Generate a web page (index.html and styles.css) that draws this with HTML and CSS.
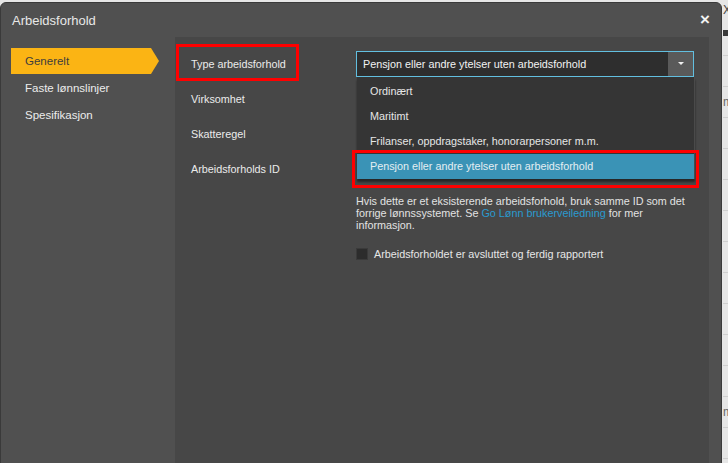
FILE: index.html
```html
<!DOCTYPE html>
<html lang="no">
<head>
  <meta charset="UTF-8" />
  <meta name="viewport" content="width=device-width, initial-scale=1.0"/>
  <title>Arbeidsforhold</title>
  <link rel="stylesheet" href="styles.css">
</head>
<body>
<div class="page">
  <div class="page-head">Xi</div>
  <div class="page-bar"></div>
  <div class="page-gap"></div>
  <div class="page-row"></div>
  <div class="page-row">m</div>
  <div class="page-row"></div>
  <div class="page-row"></div>
  <div class="page-row"></div>
  <div class="page-row"></div>
  <div class="page-row"></div>
  <div class="page-row"></div>
  <div class="page-row"></div>
  <div class="page-row"></div>
  <div class="page-row"></div>
  <div class="page-row">m</div>
  <div class="page-row"></div>
</div>

<div class="modal">
  <div class="modal-header">
    <span class="modal-title">Arbeidsforhold</span>
    <span class="modal-close">&times;</span>
  </div>

  <div class="modal-body">
    <ul class="nav">
      <li class="nav-item active">Generelt</li>
      <li class="nav-item">Faste lønnslinjer</li>
      <li class="nav-item">Spesifikasjon</li>
    </ul>

    <div class="panel">
      <div class="form">
        <div class="label">Type arbeidsforhold</div>
        <div class="field">
          <div class="select">
            <span class="select-value">Pensjon eller andre ytelser uten arbeidsforhold</span>
            <span class="select-btn"><span class="caret"></span></span>
            <ul class="dropdown">
              <li>Ordinært</li>
              <li>Maritimt</li>
              <li>Frilanser, oppdragstaker, honorarpersoner m.m.</li>
              <li class="selected">Pensjon eller andre ytelser uten arbeidsforhold</li>
            </ul>
          </div>
        </div>

        <div class="label">Virksomhet</div>
        <div class="field"></div>

        <div class="label">Skatteregel</div>
        <div class="field"></div>

        <div class="label">Arbeidsforholds ID</div>
        <div class="field"></div>

        <div class="help">
          Hvis dette er et eksisterende arbeidsforhold, bruk samme ID som det<br>
          forrige lønnssystemet. Se <a href="#">Go Lønn brukerveiledning</a> for mer<br>
          informasjon.
        </div>

        <label class="check">
          <span class="check-box"></span>
          Arbeidsforholdet er avsluttet og ferdig rapportert
        </label>
      </div>

      <div class="mark mark-label"></div>
      <div class="mark mark-option"></div>
    </div>
  </div>
</div>
</body>
</html>
```

FILE: styles.css
```css
body {
  margin: 0;
  background: #e6e6e6;
  font-family: "Liberation Sans", Arial, sans-serif;
  font-size: 11px;
  overflow: hidden;
  height: 463px;
}
.page {
  margin-left: 723px;
  color: #666;
  font-size: 12px;
}
.page-head {
  height: 30px;
  padding-top: 3px;
  box-sizing: border-box;
  color: #444;
}
.page-bar {
  height: 6px;
  background: #3a3a3a;
}
.page-gap {
  height: 20px;
  border-bottom: 1px solid #cfcfcf;
  box-sizing: border-box;
}
.page-row {
  height: 31px;
  line-height: 31px;
  border-bottom: 1px solid #cfcfcf;
  box-sizing: border-box;
}

.modal {
  position: absolute;
  left: 0;
  top: 2px;
  width: 722px;
  height: 480px;
  box-sizing: border-box;
  background: #505050;
  border: 1px solid #3a3a3a;
  border-radius: 6px 6px 0 0;
  color: #e6e6e6;
}
.modal-header {
  height: 34px;
  display: flex;
  align-items: center;
  justify-content: space-between;
  padding: 0 11px 0 11px;
}
.modal-title {
  font-size: 13px;
  color: #e8e8e8;
}
.modal-close {
  font-size: 17px;
  font-weight: bold;
  color: #f2f2f2;
}
.modal-body {
  display: flex;
  height: 440px;
}

.nav {
  list-style: none;
  margin: 0;
  padding: 11px 0 0 10px;
  width: 174px;
  box-sizing: border-box;
  display: flex;
  flex-direction: column;
  gap: 1px;
}
.nav-item {
  height: 26px;
  line-height: 26px;
  padding-left: 14px;
  font-size: 11.5px;
  color: #ececec;
}
.nav-item.active {
  width: 148px;
  box-sizing: border-box;
  background: #fbb414;
  color: #3d3d3d;
  clip-path: polygon(0 0, 140px 0, 148px 50%, 140px 100%, 0 100%);
}

.panel {
  position: relative;
  flex: 1;
  background: #474747;
  margin-right: 12px;
  padding: 9px 0 0 16px;
  font-size: 10.8px;
}
.form {
  display: grid;
  grid-template-columns: 165px 338px;
  grid-template-rows: repeat(4, 35px) 62px auto;
}
.label {
  display: flex;
  align-items: center;
  color: #ebebeb;
}
.field {
  display: flex;
  align-items: center;
}

.select {
  position: relative;
  width: 338px;
  height: 26px;
  box-sizing: border-box;
  border: 1px solid #62bfe0;
  background: #2e2e2e;
  display: flex;
  align-items: center;
}
.select-value {
  flex: 1;
  padding-left: 6px;
  color: #f2f2f2;
}
.select-btn {
  width: 25px;
  height: 100%;
  background: #5a5a5a;
  display: flex;
  align-items: center;
  justify-content: center;
}
.caret {
  width: 0;
  height: 0;
  border-left: 3px solid transparent;
  border-right: 3px solid transparent;
  border-top: 3px solid #f0f0f0;
}
.dropdown {
  position: absolute;
  top: 25px;
  left: 0;
  width: 337px;
  margin: 0;
  padding: 2px 0 0 0;
  list-style: none;
  background: #353535;
  border-right: 1px solid #4a4a4a;
  box-shadow: 0 3px 2px rgba(0,0,0,0.45);
  z-index: 2;
}
.dropdown li {
  height: 25px;
  line-height: 25px;
  padding-left: 13px;
  color: #e6e6e6;
}
.dropdown li.selected {
  background: #3a93b6;
  color: #e4eef2;
}

.help {
  grid-column: 2;
  line-height: 12px;
  color: #e2e2e2;
  padding-top: 9px;
}
.help a {
  color: #2a9bd0;
  text-decoration: none;
}
.check {
  grid-column: 2;
  display: flex;
  align-items: flex-start;
  gap: 6px;
  color: #e6e6e6;
  line-height: 12px;
}
.check-box {
  width: 12px;
  height: 12px;
  box-sizing: border-box;
  background: #2c2c2c;
  border: 1px solid #3a3a3a;
}

.mark {
  position: absolute;
  border: 3px solid #ff0000;
  box-sizing: border-box;
  pointer-events: none;
  z-index: 3;
}
.mark-label {
  left: 1px;
  top: 7px;
  width: 123px;
  height: 37px;
}
.mark-option {
  left: 177px;
  top: 113px;
  width: 347px;
  height: 38px;
}
```
